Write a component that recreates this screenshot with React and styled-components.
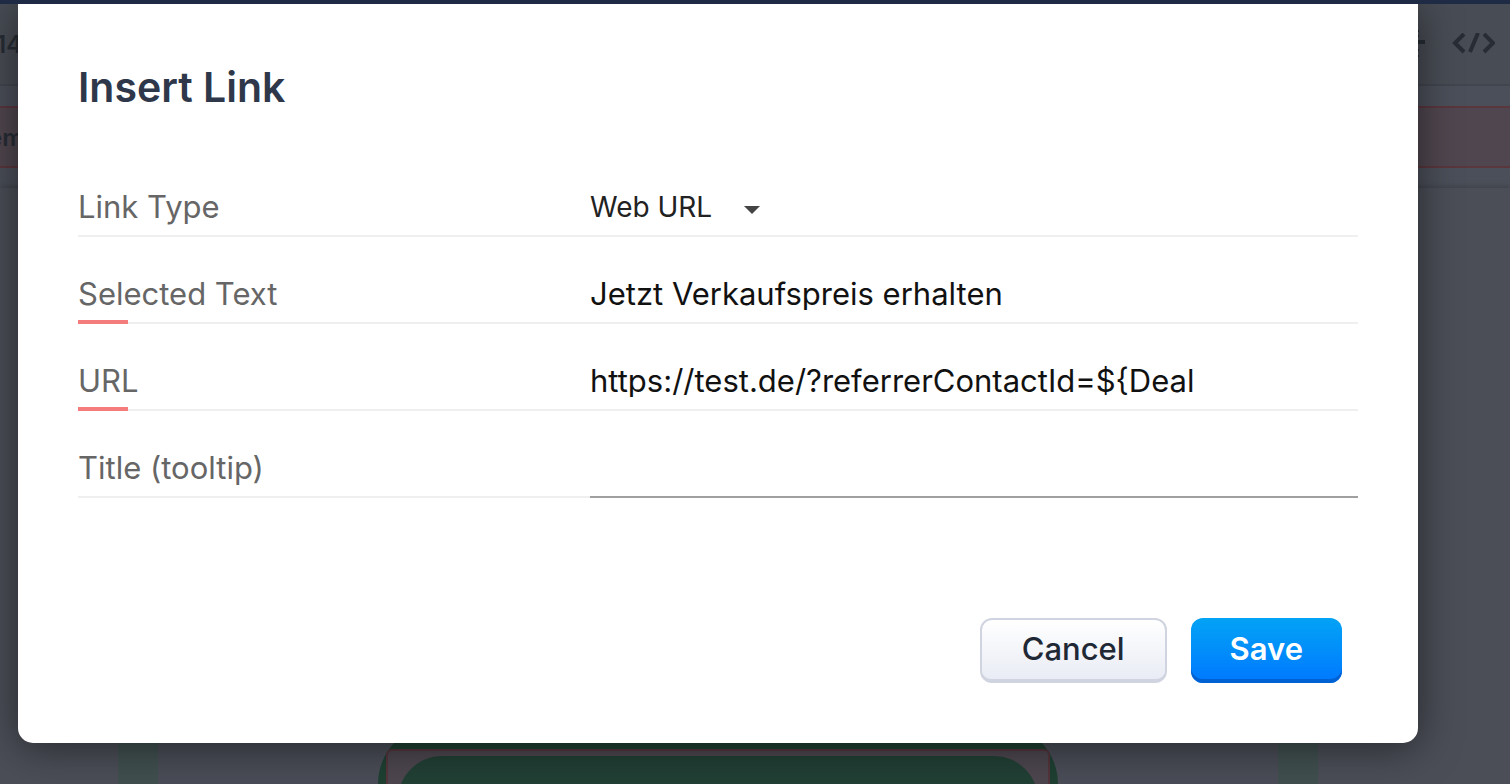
import { useState } from "react";
import styled, { createGlobalStyle, css } from "styled-components";

const App = () => {
  const [link, setLink] = useState(initialLink);

  const handleChange = (event) => {
    setLink({ ...link, [event.target.name]: event.target.value });
  };

  return (
    <Page>
      <GlobalStyle />
      <TopStrip />
      <Toolbar>
        <CutText>14</CutText>
        <ToolbarIcons>
          <DividerIcon />
          <CodeIcon />
        </ToolbarIcons>
      </Toolbar>
      <AlertBar>
        <CutText $shift={12}>em</CutText>
      </AlertBar>
      <Canvas>
        <Email>
          <EmailButton>
            <EmailButtonOutline>
              <EmailButtonFill />
            </EmailButtonOutline>
          </EmailButton>
        </Email>
      </Canvas>

      <Modal role="dialog" aria-labelledby="modal-title">
        <Title id="modal-title">Insert Link</Title>
        <form onSubmit={(event) => event.preventDefault()}>
          <Row>
            <Label htmlFor="type">Link Type</Label>
            <Value>
              <SelectWrap>
                <Select
                  id="type"
                  name="type"
                  value={link.type}
                  onChange={handleChange}
                >
                  <option>Web URL</option>
                </Select>
                <Caret viewBox="0 0 16 8" aria-hidden="true">
                  <path d="M0 0h16L8 8z" />
                </Caret>
              </SelectWrap>
            </Value>
          </Row>
          <Row>
            <Label htmlFor="text" $required>
              Selected Text
            </Label>
            <Value>
              <Input
                id="text"
                name="text"
                value={link.text}
                onChange={handleChange}
              />
            </Value>
          </Row>
          <Row>
            <Label htmlFor="url" $required>
              URL
            </Label>
            <Value>
              <Input
                id="url"
                name="url"
                value={link.url}
                onChange={handleChange}
              />
            </Value>
          </Row>
          <Row>
            <Label htmlFor="title">Title (tooltip)</Label>
            <Value $active>
              <Input
                id="title"
                name="title"
                value={link.title}
                onChange={handleChange}
              />
            </Value>
          </Row>
          <Actions>
            <Button type="button">Cancel</Button>
            <Button type="submit" $primary>
              Save
            </Button>
          </Actions>
        </form>
      </Modal>
    </Page>
  );
};

const DividerIcon = () => (
  <svg width="32" height="28" viewBox="0 0 32 28" aria-hidden="true">
    <path d="M0 12h32" stroke="currentColor" strokeWidth="4" />
    <path
      d="M6 1h20M6 6h20M6 20h20M6 26h20"
      stroke="currentColor"
      strokeWidth="2"
    />
  </svg>
);

const CodeIcon = () => (
  <svg width="44" height="22" viewBox="0 0 44 22" aria-hidden="true">
    <path
      d="M13 1L4 10l9 9M33 1l9 9-9 9M27 0l-8 19"
      fill="none"
      stroke="currentColor"
      strokeWidth="4"
    />
  </svg>
);

const initialLink = {
  type: "Web URL",
  text: "Jetzt Verkaufspreis erhalten",
  url: "https://test.de/?referrerContactId=${Deal",
  title: "",
};

const GlobalStyle = createGlobalStyle`
  * {
    box-sizing: border-box;
  }

  body {
    margin: 0;
    font-family: Inter, "Liberation Sans", sans-serif;
  }
`;

const Page = styled.div`
  position: relative;
  display: flex;
  flex-direction: column;
  height: 100vh;
  overflow: hidden;
  background-color: #4b4f59;
`;

const TopStrip = styled.div`
  flex: none;
  height: 4px;
  background-color: #1f2b45;
`;

const Toolbar = styled.div`
  flex: none;
  display: flex;
  align-items: center;
  justify-content: space-between;
  height: 82px;
  padding-right: 15px;
  color: #272c35;
  background-color: #484c54;
  border-bottom: 2px solid #41454d;
`;

const ToolbarIcons = styled.div`
  display: flex;
  align-items: center;
  gap: 26px;
`;

const CutText = styled.span`
  margin-left: -${({ $shift = 4 }) => $shift}px;
  font-size: 24px;
  font-weight: 600;
  color: #272c35;
`;

const AlertBar = styled.div`
  flex: none;
  display: flex;
  align-items: center;
  height: 62px;
  margin: 20px 0;
  background-color: #50464f;
  border-top: 2px solid #5a363d;
  border-bottom: 2px solid #5a363d;
`;

const Canvas = styled.div`
  flex: 1;
  display: flex;
  padding: 0 192px 0 118px;
  background-color: #4b4e57;
  box-shadow: 0 -2px 4px #41444c;
`;

const Email = styled.div`
  flex: 1;
  display: flex;
  align-items: flex-end;
  justify-content: center;
  background-color: #4a4d57;
  border: solid #40504f;
  border-width: 0 40px;
`;

const EmailButton = styled.div`
  flex: 0 1 680px;
  height: 120px;
  margin-bottom: -60px;
  padding: 25px 8px 0;
  background-color: #1f4033;
  border-radius: 60px 60px 0 0;
`;

const EmailButtonOutline = styled.div`
  height: 100%;
  padding: 5px 10px 0;
  background-color: #4d464f;
  border: 2px solid #55343c;
  border-bottom: 0;
  border-radius: 6px 6px 0 0;
`;

const EmailButtonFill = styled.div`
  height: 100%;
  background-color: #224035;
  border-radius: 44px 44px 0 0;
`;

const Modal = styled.section`
  position: absolute;
  top: 4px;
  left: 18px;
  right: 92px;
  padding: 59px 60px 60px;
  background-color: #fff;
  border-radius: 0 0 15px 15px;
  box-shadow: 0 4px 40px rgba(0, 0, 0, 0.5);
  clip-path: inset(0 -92px -60px -18px);
`;

const Title = styled.h1`
  margin: 0 0 39px;
  font-size: 41px;
  font-weight: 600;
  line-height: 48px;
  color: #2f384a;
`;

const Row = styled.div`
  display: grid;
  grid-template-columns: 2fr 3fr;
`;

const cell = css`
  padding: 41px 0 12px;
  border-bottom: 2px solid #efefef;
`;

const Label = styled.label`
  ${cell}
  position: relative;
  font-size: 31px;
  line-height: 32px;
  color: #666;

  ${({ $required }) =>
    $required &&
    css`
      &::after {
        content: "";
        position: absolute;
        left: 0;
        bottom: -2px;
        width: 50px;
        height: 4px;
        background-color: #f47c7c;
      }
    `}
`;

const Value = styled.div`
  ${cell}
  display: flex;
  border-bottom-color: ${({ $active }) => ($active ? "#a0a0a0" : "#efefef")};
`;

const Input = styled.input`
  width: 80%;
  height: 32px;
  padding: 0;
  border: 0;
  outline: 0;
  background: none;
  font-family: inherit;
  font-size: 31px;
  line-height: 32px;
  color: #111;
`;

const SelectWrap = styled.div`
  position: relative;
`;

const Select = styled.select`
  appearance: none;
  height: 32px;
  padding: 0 48px 0 0;
  border: 0;
  outline: 0;
  background: none;
  font-family: inherit;
  font-size: 28px;
  line-height: 32px;
  color: #222;
`;

const Caret = styled.svg`
  position: absolute;
  right: 1px;
  top: 15px;
  width: 16px;
  height: 8px;
  fill: #444;
  pointer-events: none;
`;

const Actions = styled.div`
  display: flex;
  justify-content: flex-end;
  gap: 24px;
  margin-top: 120px;
  padding-right: 16px;
`;

const Button = styled.button`
  height: 65px;
  padding: 0 40px 2px;
  border: 2px solid #d0d4e0;
  border-bottom-width: 4px;
  border-radius: 12px;
  background: linear-gradient(#fff, #e9ecf5) padding-box;
  font-family: inherit;
  font-size: 31px;
  font-weight: 500;
  color: #212835;
  cursor: pointer;

  ${({ $primary }) =>
    $primary &&
    css`
      padding: 0 39px 4px;
      border: 0;
      background: linear-gradient(#03a3f5, #0078ff);
      box-shadow: inset 0 -4px 0 #0062d2;
      font-weight: 600;
      color: #fff;
    `}
`;

export default App;
